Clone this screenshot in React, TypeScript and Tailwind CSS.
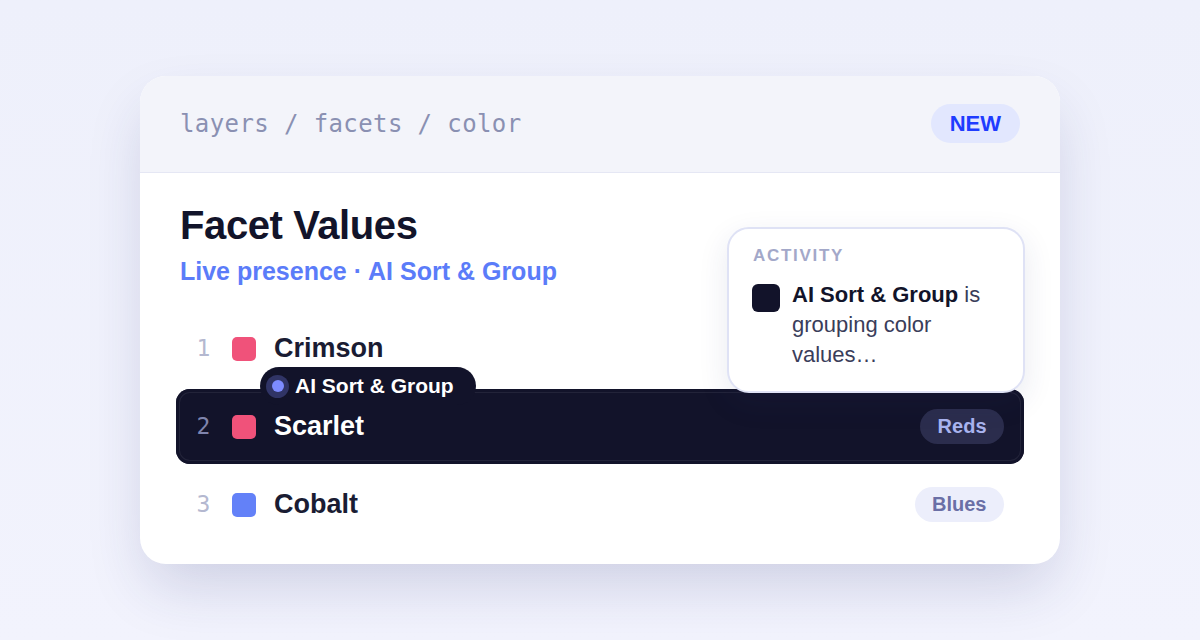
import React from "react";

const sans = { fontFamily: '"Liberation Sans", Arial, sans-serif' };
const mono = { fontFamily: '"DejaVu Sans Mono", "Liberation Mono", monospace' };

function Row({
  n,
  name,
  color,
  tag,
  active,
}: {
  n: number;
  name: string;
  color: string;
  tag?: string;
  active?: boolean;
}) {
  return (
    <div
      className={
        "relative flex h-[75px] items-center rounded-[14px] pl-[19px] pr-[20px] " +
        (active
          ? "bg-[#12132a] shadow-[inset_0_0_0_3px_#12132a,inset_0_0_0_4px_rgba(255,255,255,0.07)]"
          : "")
      }
    >
      <span
        className={
          "w-[17px] text-center text-[23px] " +
          (active ? "text-[#7f84ad]" : "text-[#b4b8d0]")
        }
        style={mono}
      >
        {n}
      </span>
      <span
        className="ml-[20px] h-[24px] w-[24px] rounded-[5px]"
        style={{ background: color }}
      />
      <span
        className={
          "ml-[18px] text-[27px] font-bold " +
          (active ? "text-white" : "text-[#1a1c33]")
        }
      >
        {name}
      </span>
      <div className="flex-1" />
      {tag && (
        <span
          className={
            "rounded-full px-[17.5px] py-[5px] text-[20px] font-bold leading-[25px] " +
            (active
              ? "bg-[#2b2d4d] text-[#a9b4ef]"
              : "bg-[#eceefb] text-[#6a6fa6]")
          }
        >
          {tag}
        </span>
      )}
      {active && (
        <div className="absolute left-[84px] top-[-22px] flex h-[38px] items-center gap-[6px] rounded-full bg-[#12132a] pl-[6px] pr-[22px]">
          <span className="flex h-[23px] w-[23px] items-center justify-center rounded-full bg-[#303466]">
            <span className="h-[12px] w-[12px] rounded-full bg-[#7d8bff]" />
          </span>
          <span className="text-[21px] font-bold text-white">AI Sort &amp; Group</span>
        </div>
      )}
    </div>
  );
}

export default function App() {
  return (
    <div
      className="flex h-[640px] w-[1200px] items-center justify-center bg-gradient-to-b from-[#eef0fb] to-[#f2f3fd]"
      style={sans}
    >
      <div className="relative w-[920px] rounded-[26px] bg-white shadow-[0_28px_60px_-8px_rgba(40,45,110,0.18)]">
        <div className="flex h-[97px] items-center justify-between rounded-t-[26px] border-b border-[#e5e7f4] bg-[#f3f4fa] px-[40px]">
          <span className="text-[24px] tracking-[0.4px] text-[#8a90b2]" style={mono}>
            layers / facets / color
          </span>
          <span className="mb-[2px] rounded-full bg-[#e2e7fe] px-[19px] py-[7px] text-[22px] font-bold leading-[25px] text-[#1f3cff]">
            NEW
          </span>
        </div>
        <div className="px-[36px] pb-[22px] pt-[28px]">
          <div className="pl-[4px]">
            <div className="text-[40px] font-bold leading-[48px] tracking-[-0.01em] text-[#12142a]">
              Facet Values
            </div>
            <div className="mt-[6px] text-[25px] font-bold leading-[32px] text-[#5b7cf9]">
              Live presence · AI Sort &amp; Group
            </div>
          </div>
          <div className="mt-[24px] flex flex-col gap-[3px]">
            <Row n={1} name="Crimson" color="#f0527a" />
            <Row n={2} name="Scarlet" color="#f0527a" tag="Reds" active />
            <Row n={3} name="Cobalt" color="#6381f8" tag="Blues" />
          </div>
        </div>
        <div className="absolute left-[587px] top-[151px] w-[298px] rounded-[22px] border-2 border-[#dfe2f5] bg-white pb-[21px] pl-[23px] pr-[22px] pt-[17px] shadow-[0_10px_30px_rgba(40,45,110,0.10)]">
          <div className="pl-[1px] text-[17px] font-bold uppercase leading-[20px] tracking-[0.1em] text-[#a3a8c9]">
            Activity
          </div>
          <div className="mt-[14px] flex items-start gap-[12px]">
            <span className="mt-[4px] h-[28px] w-[28px] shrink-0 rounded-[6px] bg-[#12132a]" />
            <p className="text-[22px] leading-[30px] text-[#3a3d5a]">
              <b className="text-[#12142a]">AI Sort &amp; Group</b> is grouping color values…
            </p>
          </div>
        </div>
      </div>
    </div>
  );
}
